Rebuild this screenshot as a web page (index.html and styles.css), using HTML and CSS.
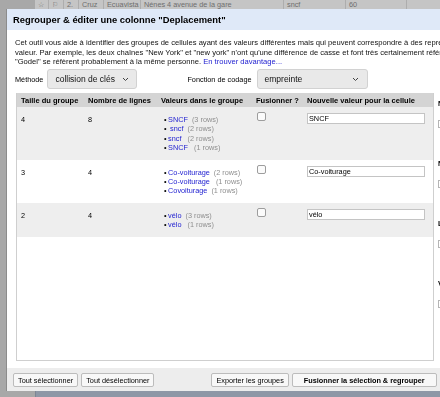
FILE: index.html
```html
<!DOCTYPE html>
<html lang="fr">
<head>
    <meta charset="UTF-8" />
    <title>Regrouper &amp; éditer une colonne</title>
    <link rel="stylesheet" href="styles.css">
</head>
<body>
    <div class="grid-behind">
        <div class="cell w-14">☆</div>
        <div class="cell w-15">⚐</div>
        <div class="cell w-15">2.</div>
        <div class="cell w-25">Cruz</div>
        <div class="cell w-37">Ecuavista</div>
        <div class="cell w-143">Nénes 4 avenue de la gare</div>
        <div class="cell w-62">sncf</div>
        <div class="cell w-61">60</div>
        <div class="cell w-40"></div>
    </div>
    <div class="page-mid"></div>
    <div class="page-foot"></div>

    <!-- Boîte de dialogue de regroupement -->
    <div class="dialog">
        <div class="dialog-header">Regrouper &amp; éditer une colonne "Deplacement"</div>
        <div class="dialog-body">
            <p class="intro">Cet outil vous aide à identifier des groupes de cellules ayant des valeurs différentes mais qui peuvent correspondre à des représentations alternatives d'une même<br>valeur. Par exemple, les deux chaînes "New York" et "new york" n'ont qu'une différence de casse et font très certainement référence au même concept, de même que "Gödel" et<br>"Godel" se réfèrent probablement à la même personne. <a href="#">En trouver davantage...</a></p>

            <div class="controls">
                <span>Méthode</span>
                <div class="select method">
                    <span>collision de clés</span>
                    <svg width="7" height="5" viewBox="0 0 7 5"><path d="M1 1 L3.5 3.5 L6 1" fill="none" stroke="#444" stroke-width="1"/></svg>
                </div>
                <span class="label-func">Fonction de codage</span>
                <div class="select keying">
                    <span>empreinte</span>
                    <svg width="7" height="5" viewBox="0 0 7 5"><path d="M1 1 L3.5 3.5 L6 1" fill="none" stroke="#444" stroke-width="1"/></svg>
                </div>
            </div>

            <div class="workspace">
                <div class="clusters">
                    <table>
                        <colgroup>
                            <col class="c-size"><col class="c-rows"><col class="c-values"><col class="c-merge"><col>
                        </colgroup>
                        <thead>
                            <tr>
                                <th>Taille du groupe</th>
                                <th>Nombre de lignes</th>
                                <th>Valeurs dans le groupe</th>
                                <th>Fusionner ?</th>
                                <th>Nouvelle valeur pour la cellule</th>
                            </tr>
                        </thead>
                        <tbody>
                            <tr class="odd">
                                <td>4</td>
                                <td>8</td>
                                <td>
                                    <ul>
                                        <li><a href="#">SNCF</a><span class="count">(3 rows)</span></li>
                                        <li><a href="#"> sncf</a><span class="count">(2 rows)</span></li>
                                        <li><a href="#">sncf </a><span class="count">(2 rows)</span></li>
                                        <li><a href="#">SNCF </a><span class="count">(1 rows)</span></li>
                                    </ul>
                                </td>
                                <td class="pick"><span class="box"></span></td>
                                <td class="edit"><input type="text" value="SNCF"></td>
                            </tr>
                            <tr>
                                <td>3</td>
                                <td>4</td>
                                <td>
                                    <ul>
                                        <li><a href="#">Co-voiturage</a><span class="count">(2 rows)</span></li>
                                        <li><a href="#">Co-voiturage </a><span class="count">(1 rows)</span></li>
                                        <li><a href="#">Covoiturage</a><span class="count">(1 rows)</span></li>
                                    </ul>
                                </td>
                                <td class="pick"><span class="box"></span></td>
                                <td class="edit"><input type="text" value="Co-voiturage"></td>
                            </tr>
                            <tr class="odd">
                                <td>2</td>
                                <td>4</td>
                                <td>
                                    <ul>
                                        <li><a href="#">vélo</a><span class="count">(3 rows)</span></li>
                                        <li><a href="#">vélo </a><span class="count">(1 rows)</span></li>
                                    </ul>
                                </td>
                                <td class="pick"><span class="box"></span></td>
                                <td class="edit"><input type="text" value="vélo"></td>
                            </tr>
                        </tbody>
                    </table>
                </div>

                <div class="facets">
                    <div class="facet"><div class="facet-title">Nombre de choix dans le groupe</div><div class="facet-bar"></div></div>
                    <div class="facet"><div class="facet-title">Nombre de lignes dans le groupe</div><div class="facet-bar"></div></div>
                    <div class="facet"><div class="facet-title">Longueur moyenne des choix</div><div class="facet-bar"></div></div>
                    <div class="facet"><div class="facet-title">Variance de longueur des choix</div><div class="facet-bar"></div></div>
                </div>
            </div>
        </div>

        <div class="dialog-footer">
            <button>Tout sélectionner</button>
            <button>Tout désélectionner</button>
            <div class="right-group">
                <button>Exporter les groupes</button>
                <button class="primary">Fusionner la sélection &amp; regrouper</button>
                <button class="primary">Fusionner la sélection &amp; fermer</button>
                <button>Fermer</button>
            </div>
        </div>
    </div>
</body>
</html>
```

FILE: styles.css
```css
body {
    margin: 0;
    width: 440px;
    height: 397px;
    overflow: hidden;
    position: relative;
    display: flex;
    flex-direction: column;
    background: #a8a8a8;
    font-family: 'Liberation Sans', Arial, sans-serif;
    font-size: 7.3px;
    color: #000;
}

/* grille de données derrière la boîte de dialogue */
.grid-behind {
    display: flex;
    height: 9px;
    margin-left: 35px;
    background: #c5c5c5;
    overflow: hidden;
}

.grid-behind .cell {
    flex: none;
    box-sizing: border-box;
    border-right: 1px solid #adadad;
    padding: 0 3px;
    color: #6e6e6e;
    line-height: 9px;
    white-space: nowrap;
    overflow: hidden;
}

.w-14 { width: 14px; }
.w-15 { width: 15px; }
.w-25 { width: 25px; }
.w-37 { width: 37px; }
.w-40 { width: 40px; }
.w-61 { width: 61px; }
.w-62 { width: 62px; }
.w-143 { width: 143px; }

.page-mid {
    flex: 1;
}

.page-foot {
    height: 6px;
    margin-left: 35px;
    background: #8e97a6;
    border-left: 1px solid #7d8594;
}

.dialog {
    position: absolute;
    left: 6px;
    top: 9px;
    width: 620px;
    height: 382px;
    box-sizing: border-box;
    background: white;
    border-left: 1px solid #8c8c8c;
    display: flex;
    flex-direction: column;
    will-change: transform;
}

.dialog-header {
    height: 21px;
    padding-left: 6px;
    background: #dfe9f8;
    font-weight: bold;
    font-size: 9.4px;
    line-height: 21px;
    color: #000;
    white-space: nowrap;
}

.dialog-body {
    flex: 1;
    display: flex;
    flex-direction: column;
    padding: 8px 0 0 8px;
    min-height: 0;
}

.intro {
    margin: 0;
    font-size: 7.6px;
    line-height: 9.5px;
    white-space: nowrap;
    color: #111;
}

a {
    color: #1c1cd0;
    text-decoration: none;
}

.controls {
    display: flex;
    align-items: center;
    height: 20px;
    margin-top: 2.5px;
    white-space: nowrap;
}

.select {
    display: flex;
    justify-content: space-between;
    align-items: center;
    height: 20px;
    box-sizing: border-box;
    padding: 0 7px;
    background: #e9e9e9;
    border: 1px solid #d2d2d2;
    border-radius: 3px;
    font-size: 8.5px;
    color: #111;
}

.method {
    width: 90px;
    margin-left: 4px;
}

.label-func {
    margin-left: 50px;
}

.keying {
    width: 111px;
    margin-left: 5px;
    padding-right: 8px;
}

.workspace {
    flex: 1;
    display: flex;
    margin-top: 4px;
    margin-bottom: 7px;
    min-height: 0;
}

.clusters {
    flex: none;
    width: 418px;
    margin-left: 1px;
    box-sizing: border-box;
    border: 1px solid #cfcfcf;
    border-top: none;
}

table {
    width: 100%;
    border-collapse: collapse;
    table-layout: fixed;
}

.c-size { width: 67px; }
.c-rows { width: 73px; }
.c-values { width: 95px; }
.c-merge { width: 51px; }

th {
    height: 14px;
    padding: 0 4px;
    background: #d4d4d4;
    font-size: 7.5px;
    text-align: left;
    white-space: nowrap;
    color: #000;
}

td {
    padding: 8px 4px 7px;
    vertical-align: top;
    line-height: 9.4px;
    white-space: nowrap;
    color: #000;
}

tr.odd {
    background: #eeeeee;
}

ul {
    list-style: none;
    margin: 0 0 0 3px;
    padding: 0;
}

li::before {
    content: "•";
    margin-right: 1.5px;
    color: #000;
}

li a {
    white-space: pre;
}

.count {
    margin-left: 4px;
    color: #8f8f8f;
}

td.pick {
    padding-top: 5px;
    padding-left: 5px;
}

.box {
    display: block;
    width: 9px;
    height: 9px;
    box-sizing: border-box;
    border: 1px solid #9d9d9d;
    border-radius: 2px;
    background: #fbfbfb;
}

td.edit {
    padding-top: 6px;
}

td.edit input {
    display: block;
    width: 118px;
    height: 11px;
    box-sizing: border-box;
    margin: 0;
    padding: 0 1px;
    border: 1px solid #c4c4c4;
    background: white;
    font-family: 'Liberation Sans', Arial, sans-serif;
    font-size: 7.3px;
    color: #000;
}

.facets {
    margin-left: 4px;
    width: 140px;
}

.facet {
    height: 60px;
    padding-top: 5.5px;
    box-sizing: border-box;
}

.facet-title {
    line-height: 9px;
    font-weight: bold;
    white-space: nowrap;
    color: #000;
}

.facet-bar {
    height: 8px;
    margin-top: 12.5px;
    box-sizing: border-box;
    border: 1px solid #b5b5b5;
}

.dialog-footer {
    height: 23px;
    box-sizing: border-box;
    padding: 5px 6px;
    display: flex;
    gap: 3px;
    background: #ededed;
    white-space: nowrap;
}

.right-group {
    display: flex;
    gap: 3px;
    margin-left: 54px;
}

button {
    height: 14px;
    padding: 0 4px;
    border: 1px solid #bcbcbc;
    border-radius: 2px;
    background: #f8f8f8;
    font-family: 'Liberation Sans', Arial, sans-serif;
    font-size: 7.3px;
    color: #000;
    white-space: nowrap;
}

button.primary {
    font-weight: bold;
    padding: 0 11px;
}
```
